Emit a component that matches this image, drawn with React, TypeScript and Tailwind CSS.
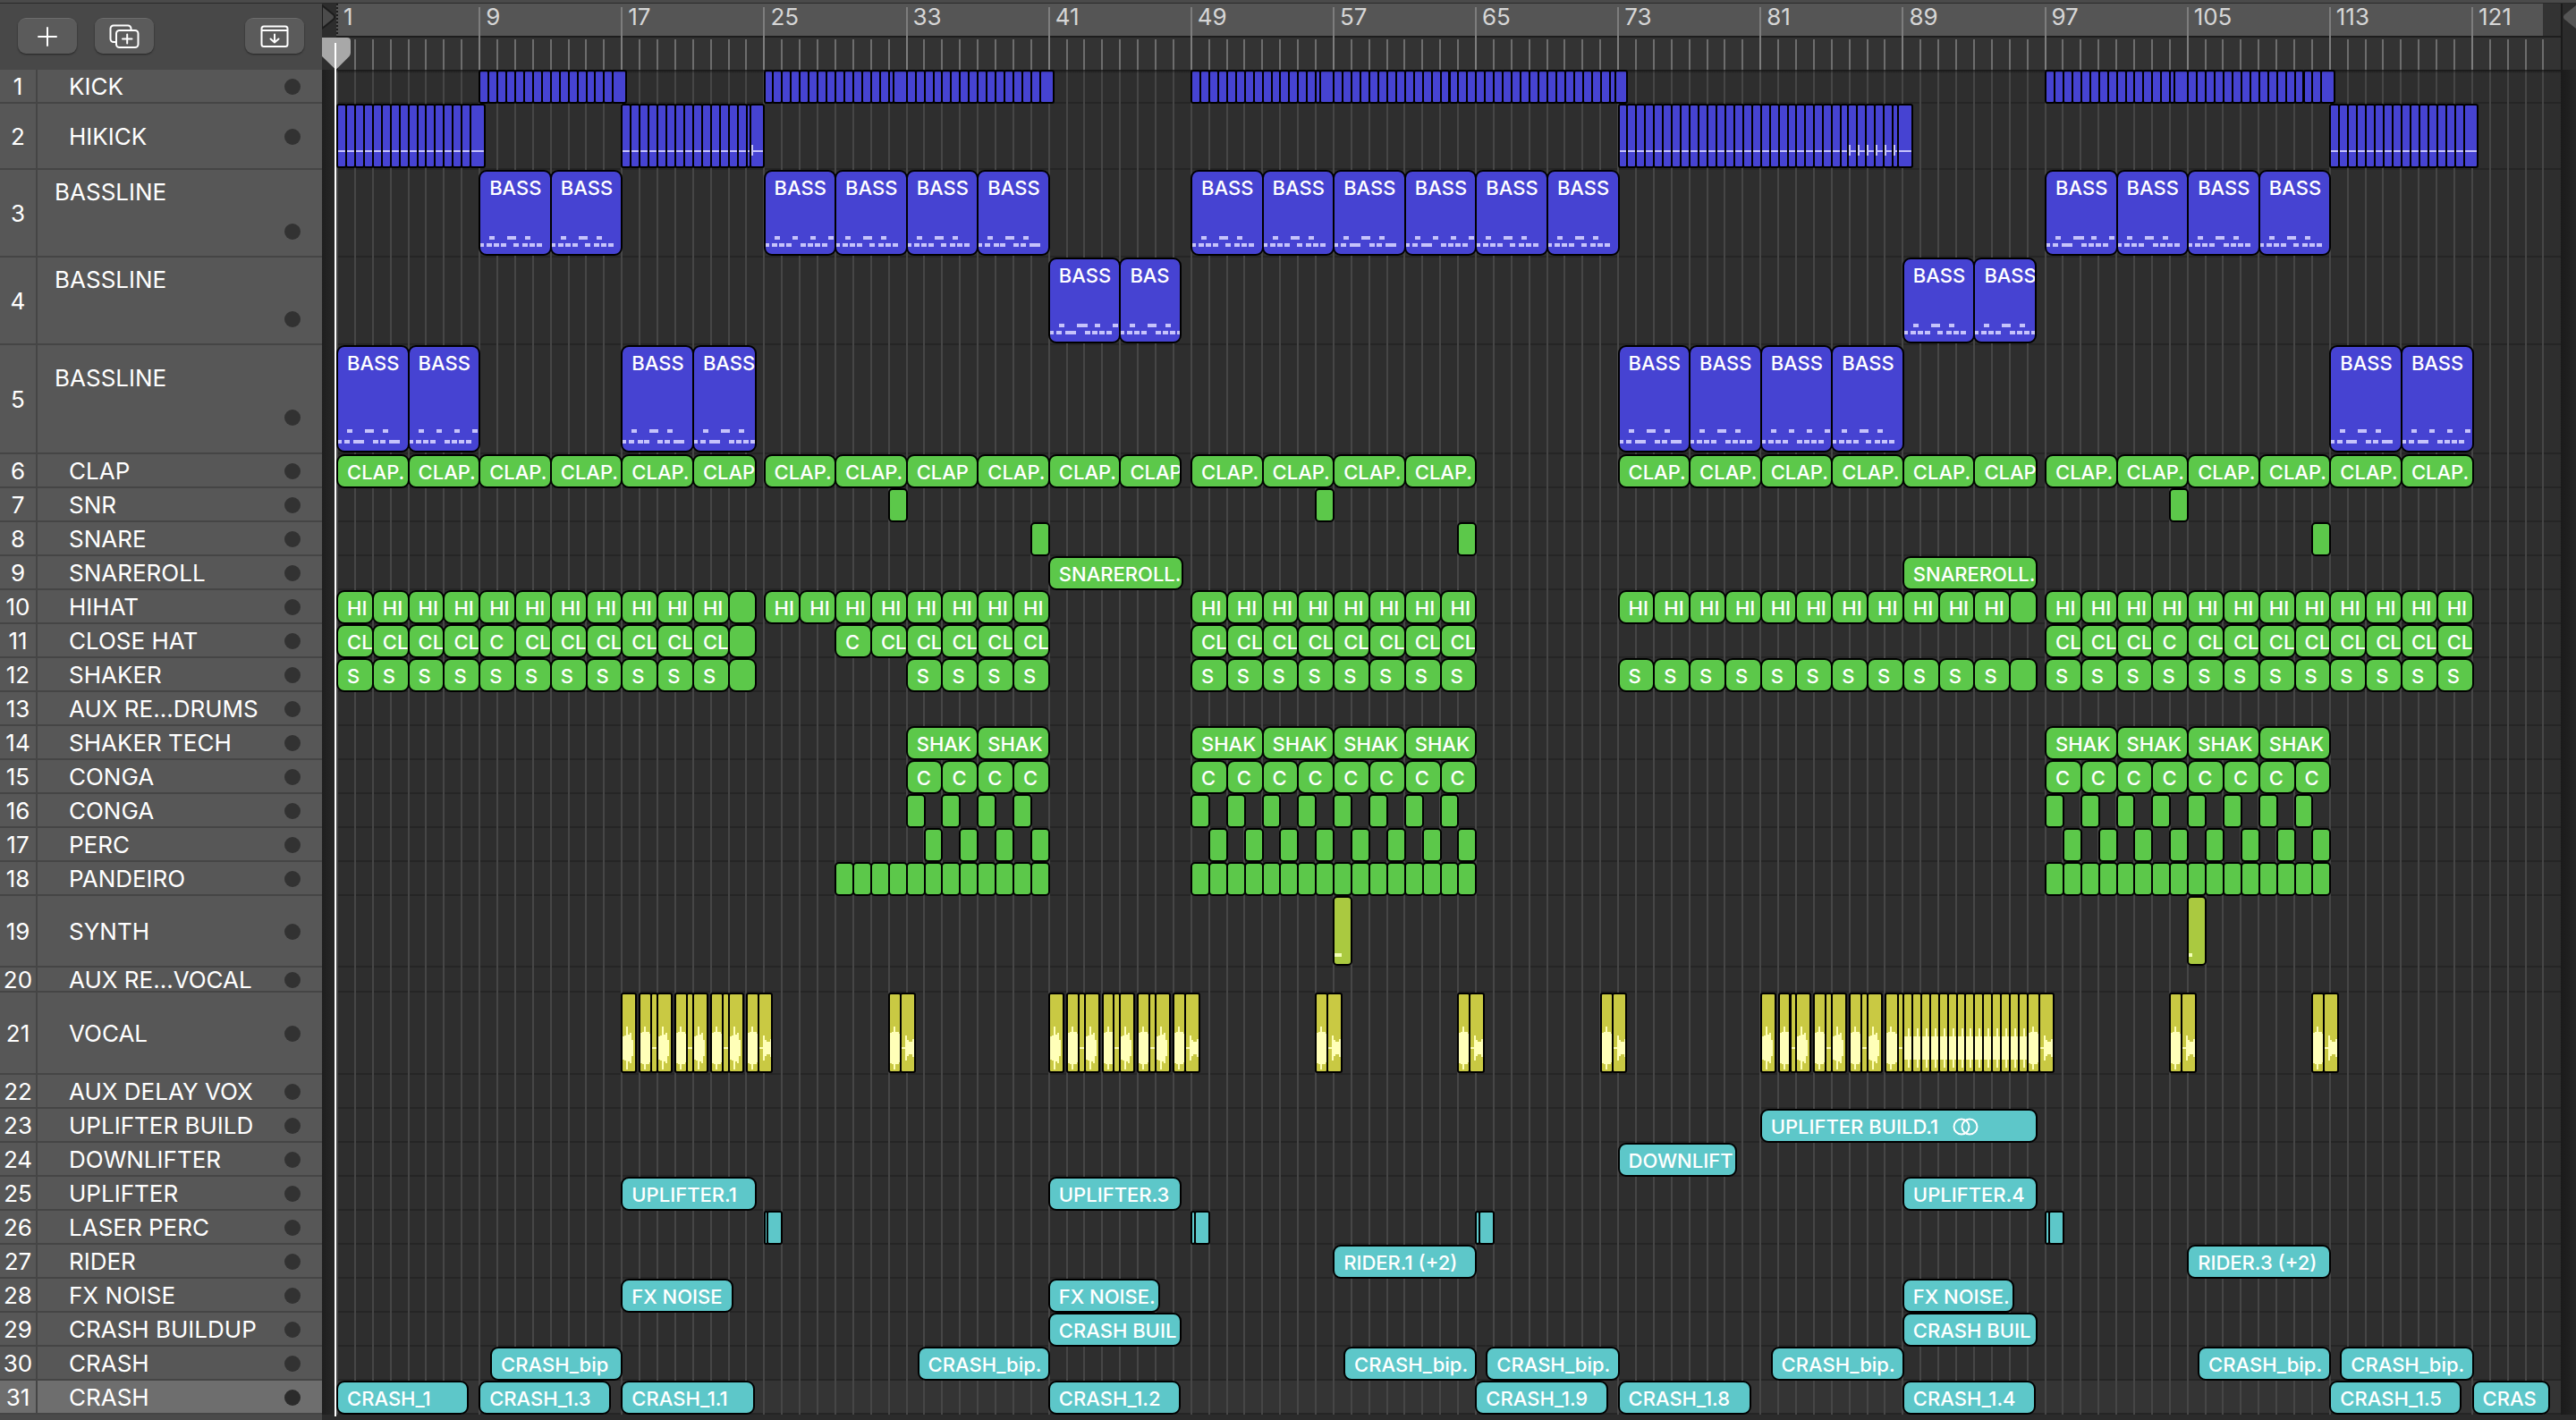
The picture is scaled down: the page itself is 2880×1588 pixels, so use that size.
import { clsx } from 'clsx';

type Color = 'blue' | 'green' | 'lime' | 'yellow' | 'teal';

interface Clip {
  start: number;
  end: number;
  label?: string;
  notes?: string;
  wave?: number[];
  stereo?: boolean;
}

interface Track {
  name: string;
  color: Color;
  size?: 'note' | 'kick' | 'bass' | 'tall' | 'synth' | 'aux' | 'vocal';
  strip?: boolean;
  selected?: boolean;
  clips: Clip[];
}

const BARS = 125;

const fills: Record<Color, string> = {
  blue: 'bg-[#4643d2]',
  green: 'bg-[#5cc84a]',
  lime: 'bg-[#aac940]',
  yellow: 'bg-[#c9c943]',
  teal: 'bg-[#5dc7c9]',
};

const heights = {
  note: 'h-[38px]',
  kick: 'h-[74px]',
  bass: 'h-[98px]',
  tall: 'h-[122px]',
  synth: 'h-[80px]',
  aux: 'h-[28px]',
  vocal: 'h-[92px]',
};

// A run of equal clips, one after another, from bar `start` up to bar `end`
const run = (start: number, end: number, len: number, label?: string, extra: Partial<Clip> = {}): Clip[] => {
  const clips: Clip[] = [];
  for (let b = start; b < end; b += len) {
    clips.push({ start: b, end: b + len, label, ...extra });
  }
  return clips;
};

// Clips of one bar, every second bar
const every2 = (start: number, end: number): Clip[] =>
  run(start, end, 2).map((c) => ({ start: c.start, end: c.start + 1 }));

const relabel = (clips: Clip[], bars: number[], label: string) =>
  clips.map((c) => (bars.includes(c.start) ? { ...c, label } : c));

const bass = (start: number, notes: string, end = start + 4, label = 'BASS'): Clip => ({
  start,
  end,
  label,
  notes,
});

// Note positions inside a bass clip: [x, width]
const highNotes: Record<string, number[][]> = {
  a: [[11, 6], [31, 10], [51, 6]],
  b: [[11, 6], [31, 6], [51, 6], [71, 6]],
  c: [[11, 6], [31, 12], [51, 6], [71, 6]],
};
const lowNotes: Record<string, number[][]> = {
  a: [[0, 4], [7, 6], [15, 6], [23, 6], [37, 6], [47, 6], [55, 6], [63, 6]],
  b: [[0, 4], [7, 6], [15, 6], [23, 6], [39, 6], [47, 6], [55, 6], [63, 6]],
  c: [[0, 4], [7, 6], [17, 12], [39, 6], [47, 6], [55, 6], [63, 6]],
  d: [[0, 4], [7, 6], [17, 12], [39, 6], [47, 6], [57, 12]],
  e: [[0, 4], [7, 6], [17, 6], [24, 6], [39, 6], [47, 6], [57, 12]],
};

const VOX_A = [13, 14, 24, 15, 17, 9];
const VOX_B = [17, 18, 24, 18, 18, 16, 22];
const VOX_LINE = [1, 1, 1, 1];
const VOX_TAIL = [1, 1, 14, 9, 7, 7, 10];
const VOX_CHOP = [13, 13, 22, 13, 20];

const vox = (start: number, end: number, wave: number[]): Clip => ({ start, end, wave });
const voxPair = (b: number) => [vox(b, b + 0.65, VOX_B), vox(b + 0.65, b + 1.45, VOX_TAIL)];
const voxTriple = (b: number) => [
  vox(b, b + 0.65, VOX_B),
  vox(b + 0.65, b + 1, VOX_LINE),
  vox(b + 1, b + 1.8, VOX_A),
];
const voxPhrase = (b: number) => [
  vox(b, b + 0.8, VOX_A),
  ...voxTriple(b + 1),
  ...voxTriple(b + 3),
  ...voxTriple(b + 5),
];

const laser = (b: number): Clip[] => [
  { start: b, end: b + 0.2 },
  { start: b + 0.2, end: b + 1 },
];

const hats = (label: string): Clip[] => [
  ...run(1, 23, 2, label),
  { start: 23, end: 24.5 },
];
const congaBars = (len: number, label?: string) => [
  ...run(33, 41, len, label),
  ...run(49, 65, len, label),
  ...run(97, 113, len, label),
];

const tracks: Track[] = [
  {
    name: 'KICK',
    color: 'blue',
    strip: true,
    clips: [
      ...run(9, 16.5, 0.5),
      { start: 16.5, end: 17.25 },
      ...run(25, 32, 0.5),
      { start: 32, end: 32.25 },
      { start: 32.25, end: 33 },
      ...run(33, 40.5, 0.5),
      { start: 40.5, end: 41.25 },
      ...run(49, 56, 0.5),
      { start: 56, end: 56.25 },
      { start: 56.25, end: 57 },
      ...run(57, 72.5, 0.5),
      { start: 72.5, end: 72.8 },
      { start: 72.8, end: 73.5 },
      ...run(97, 104, 0.5),
      { start: 104, end: 104.25 },
      { start: 104.25, end: 105 },
      ...run(105, 112.5, 0.5),
      { start: 112.5, end: 113.25 },
    ],
  },
  {
    name: 'HIKICK',
    color: 'blue',
    size: 'kick',
    strip: true,
    clips: [
      ...run(1, 8.5, 0.5, undefined, { notes: 'line' }),
      { start: 8.5, end: 9.3, notes: 'line' },
      ...run(17, 24, 0.5, undefined, { notes: 'line' }),
      { start: 24, end: 24.2, notes: 'line' },
      { start: 24.2, end: 25, notes: 'tick' },
      ...run(73, 85.5, 0.5, undefined, { notes: 'line' }),
      { start: 85.5, end: 85.9, notes: 'line' },
      ...run(85.9, 88.4, 0.5, undefined, { notes: 'tick' }),
      { start: 88.4, end: 88.7, notes: 'tick' },
      { start: 88.7, end: 89.5, notes: 'line' },
      ...run(113, 120.5, 0.5, undefined, { notes: 'line' }),
      { start: 120.5, end: 121.3, notes: 'line' },
    ],
  },
  {
    name: 'BASSLINE',
    color: 'blue',
    size: 'bass',
    clips: [
      bass(9, 'aa'),
      bass(13, 'aa'),
      bass(25, 'bb'),
      bass(29, 'aa'),
      bass(33, 'aa'),
      bass(37, 'ae'),
      bass(49, 'aa'),
      bass(53, 'aa'),
      bass(57, 'ad'),
      bass(61, 'bc'),
      bass(65, 'aa'),
      bass(69, 'aa'),
      bass(97, 'cc'),
      bass(101, 'ab'),
      bass(105, 'ab'),
      bass(109, 'aa'),
    ],
  },
  {
    name: 'BASSLINE',
    color: 'blue',
    size: 'bass',
    clips: [
      bass(41, 'cc'),
      bass(45, 'ab', 48.4, 'BAS'),
      bass(89, 'aa'),
      bass(93, 'ab', 96.45),
    ],
  },
  {
    name: 'BASSLINE',
    color: 'blue',
    size: 'tall',
    clips: [
      bass(1, 'ad'),
      bass(5, 'bb'),
      bass(17, 'ae'),
      bass(21, 'ac', 24.5),
      bass(73, 'ad'),
      bass(77, 'ab'),
      bass(81, 'bb'),
      bass(85, 'aa'),
      bass(113, 'ad'),
      bass(117, 'bc'),
    ],
  },
  {
    name: 'CLAP',
    color: 'green',
    clips: relabel(
      [
        ...run(1, 21, 4, 'CLAP.'),
        { start: 21, end: 24.5 },
        ...run(25, 45, 4, 'CLAP.'),
        { start: 45, end: 48.4 },
        ...run(49, 65, 4, 'CLAP.'),
        ...run(73, 93, 4, 'CLAP.'),
        { start: 93, end: 96.5 },
        ...run(97, 121, 4, 'CLAP.'),
      ],
      [21, 33, 45, 93],
      'CLAP',
    ),
  },
  { name: 'SNR', color: 'green', clips: [32, 56, 104].map((b) => ({ start: b, end: b + 1 })) },
  { name: 'SNARE', color: 'green', clips: [40, 64, 112].map((b) => ({ start: b, end: b + 1 })) },
  {
    name: 'SNAREROLL',
    color: 'green',
    clips: [
      { start: 41, end: 48.5, label: 'SNAREROLL.' },
      { start: 89, end: 96.5, label: 'SNAREROLL.' },
    ],
  },
  {
    name: 'HIHAT',
    color: 'green',
    clips: [
      ...hats('HI'),
      ...run(25, 41, 2, 'HI'),
      ...run(49, 65, 2, 'HI'),
      ...run(73, 95, 2, 'HI'),
      { start: 95, end: 96.5 },
      ...run(97, 121, 2, 'HI'),
    ],
  },
  {
    name: 'CLOSE HAT',
    color: 'green',
    clips: relabel(
      [...hats('CL'), ...run(29, 41, 2, 'CL'), ...run(49, 65, 2, 'CL'), ...run(97, 121, 2, 'CL')],
      [9, 29, 103],
      'C',
    ),
  },
  {
    name: 'SHAKER',
    color: 'green',
    clips: [
      ...hats('S'),
      ...run(33, 41, 2, 'S'),
      ...run(49, 65, 2, 'S'),
      ...run(73, 95, 2, 'S'),
      { start: 95, end: 96.5 },
      ...run(97, 121, 2, 'S'),
    ],
  },
  { name: 'AUX RE...DRUMS', color: 'green', clips: [] },
  { name: 'SHAKER TECH', color: 'green', clips: congaBars(4, 'SHAK') },
  { name: 'CONGA', color: 'green', clips: congaBars(2, 'C') },
  { name: 'CONGA', color: 'green', clips: [...every2(33, 41), ...every2(49, 65), ...every2(97, 113)] },
  { name: 'PERC', color: 'green', clips: [...every2(34, 42), ...every2(50, 66), ...every2(98, 114)] },
  {
    name: 'PANDEIRO',
    color: 'green',
    clips: [...run(29, 41, 1), ...run(49, 65, 1), ...run(97, 113, 1)],
  },
  {
    name: 'SYNTH',
    color: 'lime',
    size: 'synth',
    clips: [
      { start: 57, end: 58, notes: 'long' },
      { start: 105, end: 106, notes: 'short' },
    ],
  },
  { name: 'AUX RE...VOCAL', color: 'yellow', size: 'aux', clips: [] },
  {
    name: 'VOCAL',
    color: 'yellow',
    size: 'vocal',
    strip: true,
    clips: [
      ...voxPhrase(17),
      ...voxPair(24),
      ...voxPair(32),
      ...voxPhrase(41),
      ...voxPair(48),
      ...voxPair(56),
      ...voxPair(64),
      ...voxPair(72),
      ...voxPhrase(81),
      vox(88, 88.7, VOX_B),
      vox(88.7, 89, VOX_LINE),
      ...run(89, 96, 0.5, undefined, { wave: VOX_CHOP }),
      ...voxPair(96),
      ...voxPair(104),
      ...voxPair(112),
    ],
  },
  { name: 'AUX DELAY VOX', color: 'teal', clips: [] },
  {
    name: 'UPLIFTER BUILD',
    color: 'teal',
    clips: [{ start: 81, end: 96.5, label: 'UPLIFTER BUILD.1', stereo: true }],
  },
  { name: 'DOWNLIFTER', color: 'teal', clips: [{ start: 73, end: 79.6, label: 'DOWNLIFT' }] },
  {
    name: 'UPLIFTER',
    color: 'teal',
    clips: [
      { start: 17, end: 24.5, label: 'UPLIFTER.1' },
      { start: 41, end: 48.4, label: 'UPLIFTER.3' },
      { start: 89, end: 96.5, label: 'UPLIFTER.4' },
    ],
  },
  { name: 'LASER PERC', color: 'teal', strip: true, clips: [25, 49, 65, 97].flatMap(laser) },
  {
    name: 'RIDER',
    color: 'teal',
    clips: [
      { start: 57, end: 65, label: 'RIDER.1 (+2)' },
      { start: 105, end: 113, label: 'RIDER.3 (+2)' },
    ],
  },
  {
    name: 'FX NOISE',
    color: 'teal',
    clips: [
      { start: 17, end: 23.2, label: 'FX NOISE' },
      { start: 41, end: 47.2, label: 'FX NOISE.' },
      { start: 89, end: 95.2, label: 'FX NOISE.' },
    ],
  },
  {
    name: 'CRASH BUILDUP',
    color: 'teal',
    clips: [
      { start: 41, end: 48.4, label: 'CRASH BUIL' },
      { start: 89, end: 96.5, label: 'CRASH BUIL' },
    ],
  },
  {
    name: 'CRASH',
    color: 'teal',
    clips: [
      { start: 9.65, end: 17, label: 'CRASH_bip' },
      { start: 33.65, end: 41, label: 'CRASH_bip.' },
      { start: 57.6, end: 65, label: 'CRASH_bip.' },
      { start: 65.6, end: 73, label: 'CRASH_bip.' },
      { start: 81.6, end: 89, label: 'CRASH_bip.' },
      { start: 105.6, end: 113, label: 'CRASH_bip.' },
      { start: 113.6, end: 121, label: 'CRASH_bip.' },
    ],
  },
  {
    name: 'CRASH',
    color: 'teal',
    selected: true,
    clips: [
      { start: 1, end: 8.35, label: 'CRASH_1' },
      { start: 9, end: 16.35, label: 'CRASH_1.3' },
      { start: 17, end: 24.4, label: 'CRASH_1.1' },
      { start: 41, end: 48.35, label: 'CRASH_1.2' },
      { start: 65, end: 72.35, label: 'CRASH_1.9' },
      { start: 73, end: 80.4, label: 'CRASH_1.8' },
      { start: 89, end: 96.4, label: 'CRASH_1.4' },
      { start: 113, end: 120.3, label: 'CRASH_1.5' },
      { start: 121, end: 125.3, label: 'CRAS' },
    ],
  },
];

const BassNotes = ({ notes, gap }: { notes: string; gap: number }) => (
  <svg className="absolute bottom-2 left-0 h-6 w-full" fill="#c6c3fb">
    {highNotes[notes[0]].map(([x, w]) => (
      <rect key={x} x={x - 1} y={20 - gap} width={w} height={4} />
    ))}
    {lowNotes[notes[1]].map(([x, w]) => (
      <rect key={x} x={x} y={20} width={w} height={4} />
    ))}
  </svg>
);

const Waveform = ({ wave }: { wave: number[] }) => (
  <svg className="absolute bottom-0 left-0 h-[50px] w-full" fill="#ffffb8">
    {wave.map((h, i) => (
      <rect key={i} x={i * 2} y={24 - h} width={2} height={h * 2} />
    ))}
  </svg>
);

const ClipContent = ({ clip, size }: { clip: Clip; size: Track['size'] }) => {
  if (clip.wave) return <Waveform wave={clip.wave} />;
  if (size === 'bass' || size === 'tall') {
    return <BassNotes notes={clip.notes ?? 'aa'} gap={size === 'tall' ? 12 : 8} />;
  }
  if (size === 'kick') {
    return (
      <svg className="absolute bottom-3 left-0 h-3 w-full" fill="#c6c3fb">
        <rect x={0} y={6} width="100%" height={2} />
        {clip.notes === 'tick' && <rect x={0} y={0} width={2} height={12} />}
      </svg>
    );
  }
  if (size === 'synth') {
    return (
      <svg className="absolute bottom-2 left-0 h-1 w-full" fill="#f3ffb8">
        <rect x={0} y={0} width={clip.notes === 'long' ? 8 : 4} height={4} />
      </svg>
    );
  }
  return null;
};

const ClipView = ({ clip, track }: { clip: Clip; track: Track }) => {
  const len = clip.end - clip.start;
  return (
    <div
      className={clsx(
        'absolute top-0 overflow-hidden border-2 border-black',
        fills[track.color],
        track.size ? 'bottom-0.5' : 'bottom-0',
        track.strip ? 'rounded-[3px]' : len > 1 ? 'rounded-[9px]' : 'rounded-[5px]',
      )}
      style={{
        left: `${((clip.start - 1) / BARS) * 100}%`,
        width: `calc(${(len / BARS) * 100}% + 2px)`,
      }}
    >
      {clip.label && (
        <div className="flex items-center gap-4 pl-[10px] text-[22px] leading-[36px] font-medium whitespace-nowrap text-white">
          {clip.label}
          {clip.stereo && (
            <svg width="30" height="20" viewBox="0 0 30 20" fill="none" stroke="currentColor" strokeWidth="2">
              <circle cx="10" cy="10" r="8.5" />
              <circle cx="19" cy="10" r="8.5" />
            </svg>
          )}
        </div>
      )}
      <ClipContent clip={clip} size={track.size} />
    </div>
  );
};

const ToolButton = ({ label, children }: { label: string; children: React.ReactNode }) => (
  <button
    type="button"
    aria-label={label}
    className="flex h-10 w-[66px] items-center justify-center rounded-[9px] border-t border-[#6c6c6c] bg-[#5b5b5b] text-white shadow-[0_1px_2px_rgba(0,0,0,0.5)]"
  >
    {children}
  </button>
);

const Toolbar = () => (
  <div className="flex h-[74px] items-start gap-5 bg-[#484848] px-5 pt-4">
    <ToolButton label="Add track">
      <svg width="22" height="22" viewBox="0 0 22 22" stroke="currentColor" strokeWidth="2" strokeLinecap="round">
        <path d="M11 1v20M1 11h20" />
      </svg>
    </ToolButton>
    <ToolButton label="Duplicate track">
      <svg width="34" height="28" viewBox="0 0 34 28" fill="none" stroke="currentColor" strokeWidth="2" strokeLinecap="round">
        <path d="M8 20H5a3.500 3.500 0 0 1-3.500-3.500V5A3.500 3.500 0 0 1 5 1.500h16A3.500 3.500 0 0 1 24.500 5v1" />
        <rect x="8" y="7" width="24.500" height="19" rx="3.500" />
        <path d="M20.200 11.500v10M15 16.500h10.500" />
      </svg>
    </ToolButton>
    <div className="ml-auto">
      <ToolButton label="Hide tracks">
        <svg width="32" height="26" viewBox="0 0 32 26" fill="none" stroke="currentColor" strokeWidth="2" strokeLinecap="round">
          <rect x="1.500" y="1.500" width="29" height="22.500" rx="2.500" />
          <path d="M2 6h28" />
          <path d="M16 10.500v9M11.500 15.500l4.500 4 4.500-4" />
        </svg>
      </ToolButton>
    </div>
  </div>
);

const TrackHeader = ({ track, index }: { track: Track; index: number }) => {
  const large = track.size === 'bass' || track.size === 'tall';
  return (
    <li
      className={clsx(
        'flex border-b-2 border-[#454545] text-[26px] leading-6 text-white',
        heights[track.size ?? 'note'],
        track.selected ? 'bg-[#6e6e6e]' : 'bg-[#575757]',
      )}
    >
      <span className="flex w-[42px] items-center justify-center border-r-2 border-[#454545] pt-0.5">
        {index + 1}
      </span>
      <div
        className={clsx(
          'flex flex-1 pr-6',
          large
            ? 'flex-col justify-center gap-[23px] pb-1.5 pl-[19px]'
            : 'items-center justify-between pt-0.5 pl-[35px]',
        )}
      >
        <span className="whitespace-nowrap">{track.name}</span>
        <span
          className={clsx(
            'size-[18px] rounded-full',
            large && 'self-end',
            track.selected ? 'bg-[#2b2b2b]' : 'bg-[#323232]',
          )}
        />
      </div>
    </li>
  );
};

const Ruler = () => (
  <div className="flex h-[74px] bg-[#333333]">
    <div className="relative w-4 bg-[#2d2d2d]">
      <svg className="absolute top-0 left-0" width="16" height="36" viewBox="0 0 16 36">
        <path d="M0 2L13 12.500Q15 15 13 17.500L0 28Z" fill="#4b4b4b" stroke="#1d1d1d" strokeWidth="2" />
      </svg>
    </div>
    <div className="relative flex-1">
      <div className="mr-5 h-9 bg-[#555555]" />
      <div className="h-0.5 bg-[#1e1e1e]" />
      <div className="absolute inset-0 flex">
        {Array.from({ length: BARS }, (_, i) => (
          <div
            key={i}
            className={clsx(
              'relative flex-1 border-l-2',
              i === 0
                ? 'border-dotted border-[#1e1e1e]'
                : i % 8 === 0
                  ? 'mt-1 border-[#7d7d7d]'
                  : 'mt-10 border-[#6d6d6d]',
            )}
          >
            {i % 8 === 0 && (
              <span
                className={clsx(
                  'absolute left-1.5 text-[26px] leading-6 text-[#d6d6d6]',
                  i === 0 ? 'top-[3px]' : '-top-px',
                )}
              >
                {i + 1}
              </span>
            )}
          </div>
        ))}
      </div>
    </div>
    <div className="w-[17px] border-l-2 border-[#1a1a1a] bg-[#2b2b2b]">
      <svg width="15" height="36" viewBox="0 0 15 36">
        <path d="M15 2L2 12.500Q0 15 2 17.500L15 28Z" fill="#555555" />
      </svg>
    </div>
  </div>
);

const Playhead = () => (
  <svg className="pointer-events-none absolute top-[38px] left-0 h-[1542px] w-8 overflow-hidden">
    <path d="M-1 0H28Q32 0 32 4V17Q32 19 30.500 21L15.500 36L0 21Z" fill="#a8a8a8" />
    <rect x="14" y="6" width="2" height="1536" fill="#ffffff" />
  </svg>
);

const App = () => (
  <div className="flex min-h-screen flex-col bg-[#2b2b2b] [font-family:Inter,'Liberation_Sans',sans-serif]">
    <div className="h-1 border-b border-[#2a2a2a] bg-[#4a4a4a]" />
    <div className="flex flex-1">
      <aside className="flex w-[360px] flex-none flex-col bg-[#4a4a4a]">
        <Toolbar />
        <ol>
          {tracks.map((track, i) => (
            <TrackHeader key={i} track={track} index={i} />
          ))}
        </ol>
      </aside>

      <main className="relative min-w-0 flex-1">
        <Ruler />
        <div className="relative flex">
          <div className="w-4 bg-linear-to-r from-[#1e1e1e] to-[#292929]" />
          <div className="relative min-w-0 flex-1">
            {/* Row backgrounds */}
            {tracks.map((track, i) => (
              <div
                key={i}
                className={clsx(
                  'border-b-2 border-[#252525]',
                  heights[track.size ?? 'note'],
                  track.selected ? 'bg-[#343434]' : 'bg-[#2e2e2e]',
                )}
              />
            ))}
            {/* Bar lines */}
            <div className="absolute inset-0 flex">
              {Array.from({ length: BARS }, (_, i) => (
                <div key={i} className="flex-1 border-l-2 border-[#464646]" />
              ))}
            </div>
            {/* Clips */}
            <div className="absolute inset-0">
              {tracks.map((track, i) => (
                <div key={i} className={clsx('relative', heights[track.size ?? 'note'])}>
                  {track.clips.map((clip, j) => (
                    <ClipView key={j} clip={clip} track={track} />
                  ))}
                </div>
              ))}
            </div>
            <div className="absolute inset-x-0 top-0 h-1 bg-linear-to-b from-black/50 to-transparent" />
          </div>
          <div className="w-[17px] bg-linear-to-r from-[#1a1a1a] to-[#242424]" />
        </div>
        <Playhead />
      </main>
    </div>
  </div>
);

export default App;
